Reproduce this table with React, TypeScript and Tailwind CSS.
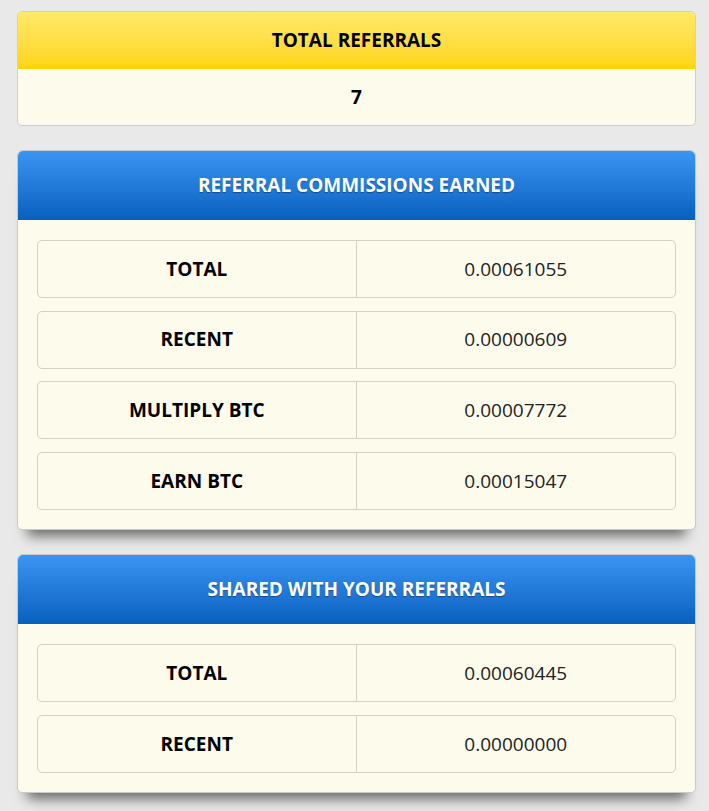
import React from 'react'

type Row = { label: string; value: string }

const commissions: Row[] = [
  { label: 'TOTAL', value: '0.00061055' },
  { label: 'RECENT', value: '0.00000609' },
  { label: 'MULTIPLY BTC', value: '0.00007772' },
  { label: 'EARN BTC', value: '0.00015047' },
]

const shared: Row[] = [
  { label: 'TOTAL', value: '0.00060445' },
  { label: 'RECENT', value: '0.00000000' },
]

function StatRow({ row }: { row: Row }) {
  return (
    <div className="flex h-[58px] rounded-[5px] border border-[#d3d1c8] text-[19px]">
      <div className="flex w-1/2 items-center justify-center border-r border-[#d3d1c8] font-bold text-black">
        {row.label}
      </div>
      <div className="flex w-1/2 items-center justify-center text-[#222]">{row.value}</div>
    </div>
  )
}

function BlueCard({ title, rows }: { title: string; rows: Row[] }) {
  return (
    <div className="rounded-[5px] border border-[#c9c9c9] bg-[#fdfbec] shadow-[0_16px_12px_-10px_rgba(0,0,0,0.55)]">
      <div className="flex h-[69px] items-center justify-center rounded-t-[5px] bg-gradient-to-b from-[#3a95f2] to-[#0660bf] text-[19px] font-bold text-white [text-shadow:0_1px_1px_rgba(0,0,0,0.35)]">
        {title}
      </div>
      <div className="flex flex-col gap-[12.7px] px-[19px] pt-[20px] pb-[19px]">
        {rows.map((r) => (
          <StatRow key={r.label + r.value} row={r} />
        ))}
      </div>
    </div>
  )
}

export default function App() {
  return (
    <div
      className="min-h-[811px] bg-[#e9e9e9] pl-[17px] pr-[13px] pt-[11px] pb-[20px]"
      style={{ fontFamily: '"Open Sans", "Liberation Sans", sans-serif' }}
    >
      <div className="flex flex-col gap-[24px]">
        <div className="overflow-hidden rounded-[5px] border border-[#cfcfcf] bg-[#fdfbec]">
          <div className="flex h-[57px] items-center justify-center bg-gradient-to-b from-[#ffe967] to-[#ffd500] text-[19px] font-bold text-black">
            TOTAL REFERRALS
          </div>
          <div className="flex h-[56px] items-center justify-center text-[19px] font-bold text-black">7</div>
        </div>
        <BlueCard title="REFERRAL COMMISSIONS EARNED" rows={commissions} />
        <BlueCard title="SHARED WITH YOUR REFERRALS" rows={shared} />
      </div>
    </div>
  )
}
